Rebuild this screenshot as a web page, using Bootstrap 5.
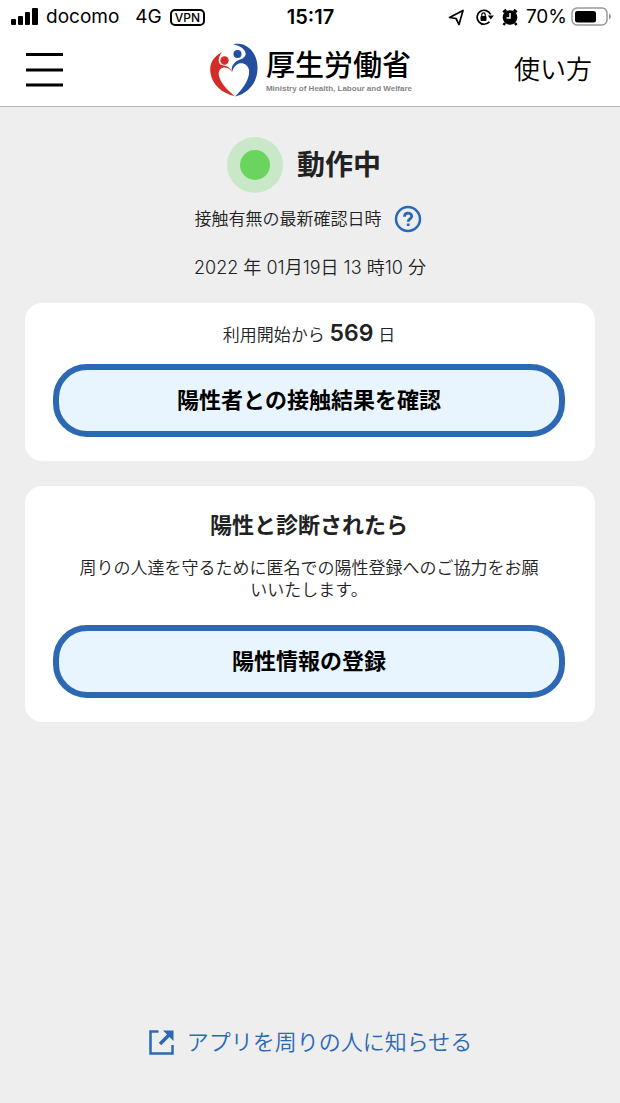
<!DOCTYPE html>
<html lang="ja">
<head>
<meta charset="utf-8">
<meta name="viewport" content="width=device-width, initial-scale=1">
<title>接触確認アプリ</title>
<link href="https://cdn.jsdelivr.net/npm/bootstrap@5.3.0/dist/css/bootstrap.min.css" rel="stylesheet">
<style>
body { background: #eee; color: #222; font-family: Inter, "Noto Sans CJK JP", sans-serif; font-size: 17px; font-weight: 350; line-height: 22px; }
svg { display: block; flex-shrink: 0; }
.split-row { display: grid; grid-template-columns: 1fr auto 1fr; align-items: center; }
.status-bar { height: 34px; padding: 0 9px 0 10px; color: #000; font-size: 19px; font-weight: 400; }
.clock { font-size: 20px; font-weight: 600; }
.vpn-tag { border: 2px solid #000; border-radius: 5px; font-size: 12px; font-weight: 500; line-height: 13px; padding: 0 3px; }
.app-header { height: 73px; padding: 0 28px 0 26px; border-bottom: 1px solid #b4b4b4; color: #000; }
.help-link { color: #000; font-size: 26px; line-height: 36px; }
.brand-name { font-size: 29px; font-weight: 500; line-height: 34px; }
.brand-sub { font-family: "Liberation Sans", sans-serif; font-size: 8px; font-weight: 700; line-height: 12px; color: #858585; }
.content { padding: 30px 25px 46px; }
.status-row { gap: 14px; padding-right: 12px; }
.status-title { font-size: 28px; font-weight: 700; line-height: 40px; }
.pulse-dot { width: 56px; height: 56px; border-radius: 50%; background: #c8e8c8; }
.pulse-dot span { width: 30px; height: 30px; border-radius: 50%; background: #6bd45f; }
.check-date { font-size: 18px; }
.panel { background: #fff; border-radius: 17px; padding: 15px 30px 24px 28px; }
.panel + .panel { margin-top: 25px; }
.panel-title { font-size: 22px; font-weight: 700; line-height: 32px; }
.day-count { font-size: 23px; font-weight: 600; line-height: 30px; }
.btn-pill { --bs-btn-border-width: 6px; --bs-btn-border-color: #2d68b2; --bs-btn-bg: #e8f5fe; --bs-btn-color: #000; --bs-btn-hover-bg: #d8edfc; --bs-btn-hover-color: #000; --bs-btn-hover-border-color: #2d68b2; --bs-btn-border-radius: 34px; height: 73px; font-size: 22px; font-weight: 700; }
.share-link { color: #2a69b5; font-size: 22px; line-height: 30px; }
</style>
<script defer src="https://cdn.jsdelivr.net/npm/bootstrap@5.3.0/dist/js/bootstrap.bundle.min.js"></script>
</head>
<body class="d-flex flex-column min-vh-100">
<div class="bg-white">
  <div class="status-bar split-row">
    <div class="d-flex align-items-center gap-2">
      <svg width="28" height="18" aria-hidden="true"><rect x="1" y="11" width="5" height="6" rx="1"/><rect x="8" y="8" width="5" height="9" rx="1"/><rect x="15" y="4" width="5" height="13" rx="1"/><rect x="22" y="0" width="6" height="17" rx="1"/></svg>
      <span>docomo</span><span class="ms-2">4G</span><span class="vpn-tag">VPN</span>
    </div>
    <div class="clock">15:17</div>
    <div class="d-flex align-items-center justify-content-end gap-2">
      <svg width="16" height="17" aria-hidden="true"><path d="M1.500 8.500 15 1.500 11 15.500 8 9.500Z" fill="none" stroke="#000" stroke-width="1.700" stroke-linejoin="round"/></svg>
      <svg class="ms-1" width="18" height="18" aria-hidden="true"><path d="M13.500 13.800A7 7 0 1 1 14.600 6.500" fill="none" stroke="#000" stroke-width="1.700"/><path d="M11.800 7.500h6l-3 4z"/><rect x="4.500" y="8" width="6" height="5" rx="1"/><path d="M5.800 8V6.500a1.700 1.700 0 0 1 3.400 0V8" fill="none" stroke="#000" stroke-width="1.200"/></svg>
      <svg width="16" height="18" aria-hidden="true"><circle cx="8" cy="9.500" r="7.300"/><path d="M1.200 4.200 4.200 1.800M14.800 4.200 11.800 1.800M3 15l-1.500 2M13 15l1.500 2" fill="none" stroke="#000" stroke-width="2.500"/><path d="M8 5v5H4.500" fill="none" stroke="#fff" stroke-width="1.500"/></svg>
      <div class="d-flex align-items-center gap-1"><span>70%</span>
      <svg width="40" height="20" aria-hidden="true"><rect x="1" y="1" width="35" height="17" rx="5" fill="none" stroke="#999" stroke-width="1.500"/><rect x="4" y="4" width="21" height="11.500" rx="2.500"/><path d="M38 6.500q2 1 2 3t-2 3z" fill="#999"/></svg></div>
    </div>
  </div>
  <header class="app-header split-row">
    <button type="button" class="btn p-0 border-0 text-start" aria-label="メニュー"><svg width="37" height="34"><path d="M0 1.500h37M0 17h37M0 32h37" stroke="#000" stroke-width="3"/></svg></button>
    <div class="d-flex align-items-center gap-2 ps-1">
      <svg width="48" height="54" viewBox="0 0 48 54" aria-hidden="true">
        <g fill="#d42c29"><circle cx="14.500" cy="17.500" r="4.200"/><path d="M12 9C3 14-1 21 .5 30C2 41 11 50 25 53.300C17 47 10 39 8.800 32C8 26.500 12 24 16 24.700C19 25.200 21 27 22 29.500C20.800 24.500 17 23 12.500 22.300C7.500 21.500 7.500 15 12 9Z"/></g>
        <g fill="#234f9e"><circle cx="27.500" cy="11" r="4"/><path d="M23 1.200C38-2 48 11 47.500 26C47 41 37 51 25 53.500C33 46 40 36 39 27C38 20.500 31 18.500 27 21.500C24.500 23 22.500 26 22 29.500C20.500 23 24.500 18.500 30 16.500C39.500 14 37 4 23 1.200Z"/></g>
      </svg>
      <div class="pt-1"><div class="brand-name">厚生労働省</div><div class="brand-sub">Ministry of Health, Labour and Welfare</div></div>
    </div>
    <a href="#" class="help-link text-end text-decoration-none">使い方</a>
  </header>
</div>
<main class="content flex-grow-1 d-flex flex-column text-center">
  <section class="d-flex flex-column align-items-center mb-4">
    <div class="status-row d-flex align-items-center">
      <div class="pulse-dot d-flex align-items-center justify-content-center"><span></span></div>
      <h1 class="status-title m-0">動作中</h1>
    </div>
    <div class="d-flex align-items-center gap-2 mt-2 pt-1 pe-1">
      <span>接触有無の最新確認日時</span>
      <button type="button" class="btn p-0 border-0 ms-1" aria-label="ヘルプ"><svg width="28" height="28" fill="none" stroke="#2a69b5" stroke-width="2.500"><circle cx="14" cy="14" r="12"/><path d="M10.500 11.700c0-4.700 7.200-4.500 7.200-.5 0 2.800-3.500 2.600-3.500 5.500M14.200 18.500v2.500" stroke-width="2.800"/></svg></button>
    </div>
    <div class="check-date mt-4">2022 年 01月19日 13 時10 分</div>
  </section>
  <section class="panel">
    <p class="mb-3">利用開始から <span class="day-count">569</span> 日</p>
    <button type="button" class="btn btn-pill w-100">陽性者との接触結果を確認</button>
  </section>
  <section class="panel">
    <h2 class="panel-title mt-2 mb-3">陽性と診断されたら</h2>
    <p class="mb-4 px-4">周りの人達を守るために匿名での陽性登録へのご協力をお願いいたします。</p>
    <button type="button" class="btn btn-pill w-100">陽性情報の登録</button>
  </section>
  <footer class="mt-auto d-flex justify-content-center">
    <a href="#" class="share-link d-flex align-items-center gap-2 text-decoration-none"><svg width="27" height="27" fill="none" stroke="#2a69b5" stroke-width="2.500"><path d="M10.500 2.500H2.500v22h22V16"/><path d="M12 15 21 6" stroke-width="3.500"/><path d="M15 1.500h10.500V12z" fill="#2a69b5" stroke="none"/></svg><span class="ms-1">アプリを周りの人に知らせる</span></a>
  </footer>
</main>
</body>
</html>
